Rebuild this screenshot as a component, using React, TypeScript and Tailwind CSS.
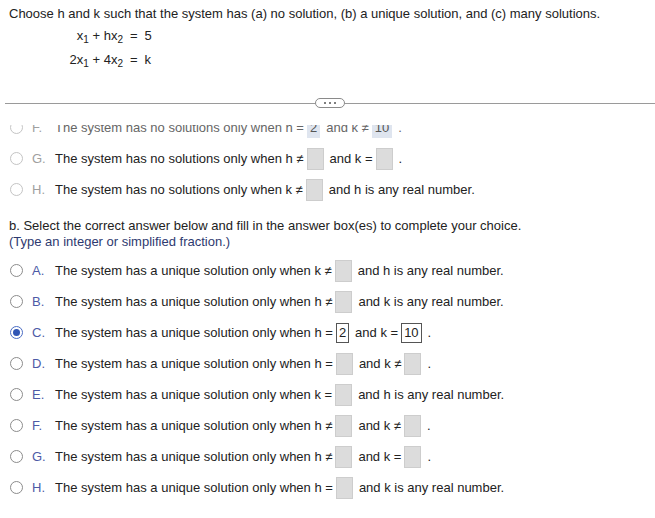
import React from "react";

const Box = ({ value, faded }: { value?: string; faded?: boolean }) => {
  if (value !== undefined) {
    return (
      <span
        className={
          faded
            ? "inline-flex h-[20px] items-center justify-center bg-[#dfe5ef] px-[3px] text-[#555] leading-none"
            : "inline-flex h-[20px] items-center justify-center border border-[#555] bg-white px-[2px] leading-none"
        }
      >
        {value}
      </span>
    );
  }
  return <span className="inline-block h-[22px] w-[17px] border border-[#cdcdcd] bg-[#dcdcdc]" />;
};

const Radio = ({ checked, faded }: { checked?: boolean; faded?: boolean }) => (
  <span
    className={
      checked
        ? "flex h-[13px] w-[13px] items-center justify-center rounded-full border border-[#4a6cc4] bg-white"
        : faded
        ? "flex h-[13px] w-[13px] items-center justify-center rounded-full border border-[#c4c4c4] bg-white"
        : "flex h-[13px] w-[13px] items-center justify-center rounded-full border border-[#8c8c8c] bg-white"
    }
  >
    {checked && <span className="block h-[7px] w-[7px] rounded-full bg-[#2f55b5]" />}
  </span>
);

type Part = string | { box: string | null };

const Row = ({
  letter,
  parts,
  checked,
  faded,
  gray,
}: {
  letter: string;
  parts: Part[];
  checked?: boolean;
  faded?: boolean;
  gray?: boolean;
}) => (
  <div className="flex h-[31px] items-center">
    <div className="ml-[10px] w-[22px]">
      <Radio checked={checked} faded={faded || gray} />
    </div>
    <div className={gray || faded ? "w-[23px] text-[#a0a0a0]" : "w-[23px] text-[#4d5aa6]"}>{letter}</div>
    <div className={faded ? "flex items-center text-[#666]" : "flex items-center text-[#222]"}>
      {parts.map((p, i) =>
        typeof p === "string" ? (
          <span key={i} className="whitespace-pre">
            {p}
          </span>
        ) : (
          <span key={i} className="ml-[3px] mr-[6px] inline-flex">
            {p.box === null ? <Box /> : <Box value={p.box} faded={faded} />}
          </span>
        )
      )}
    </div>
  </div>
);

const Sub = ({ children }: { children: React.ReactNode }) => (
  <sub className="relative top-[3px] text-[10px] leading-none">{children}</sub>
);

export default function App() {
  const base = "The system has a unique solution only when ";
  return (
    <div
      className="h-[518px] w-[655px] overflow-hidden bg-white text-[13px] leading-[16px] text-[#222]"
      style={{ fontFamily: '"Liberation Sans", Arial, sans-serif' }}
    >
      <div className="pl-[9px] pt-[6px]">
        Choose h and k such that the system has (a) no solution, (b) a unique solution, and (c) many solutions.
      </div>
      <div className="mt-[6px] grid grid-cols-[123px_auto_auto] justify-start gap-y-[8px]">
        <div className="text-right">
          x<Sub>1</Sub> + hx<Sub>2</Sub>
        </div>
        <div className="pl-[7px]">=</div>
        <div className="pl-[7px]">5</div>
        <div className="text-right">
          2x<Sub>1</Sub> + 4x<Sub>2</Sub>
        </div>
        <div className="pl-[7px]">=</div>
        <div className="pl-[7px]">k</div>
      </div>
      <div className="mt-[30px] flex items-center pl-[5px]">
        <div className="h-px flex-1 bg-[#9a9a9a]" />
        <div className="flex h-[10px] w-[30px] items-center justify-center gap-[3px] rounded-full border border-[#8a8a8a] bg-white">
          <span className="block h-[2px] w-[2px] rounded-full bg-[#555]" />
          <span className="block h-[2px] w-[2px] rounded-full bg-[#555]" />
          <span className="block h-[2px] w-[2px] rounded-full bg-[#555]" />
        </div>
        <div className="h-px flex-1 bg-[#9a9a9a]" />
      </div>
      <div className="mt-[17px] flow-root overflow-hidden">
        <div className="-mt-[13px]">
          <Row
            letter="F."
            faded
            parts={["The system has no solutions only when h =", { box: "2" }, "and k ≠", { box: "10" }, "."]}
          />
          <Row
            letter="G."
            gray
            parts={["The system has no solutions only when h ≠", { box: null }, "and k =", { box: null }, "."]}
          />
          <Row
            letter="H."
            gray
            parts={["The system has no solutions only when k ≠", { box: null }, "and h is any real number."]}
          />
        </div>
      </div>
      <div className="mt-[13px] pl-[9px]">
        <div>b. Select the correct answer below and fill in the answer box(es) to complete your choice.</div>
        <div className="text-[#2e3a70]">(Type an integer or simplified fraction.)</div>
      </div>
      <div className="mt-[5px]">
        <Row letter="A." parts={[base + "k ≠", { box: null }, "and h is any real number."]} />
        <Row letter="B." parts={[base + "h ≠", { box: null }, "and k is any real number."]} />
        <Row letter="C." checked parts={[base + "h =", { box: "2" }, "and k =", { box: "10" }, "."]} />
        <Row letter="D." parts={[base + "h =", { box: null }, "and k ≠", { box: null }, "."]} />
        <Row letter="E." parts={[base + "k =", { box: null }, "and h is any real number."]} />
        <Row letter="F." parts={[base + "h ≠", { box: null }, "and k ≠", { box: null }, "."]} />
        <Row letter="G." parts={[base + "h ≠", { box: null }, "and k =", { box: null }, "."]} />
        <Row letter="H." parts={[base + "h =", { box: null }, "and k is any real number."]} />
      </div>
    </div>
  );
}
